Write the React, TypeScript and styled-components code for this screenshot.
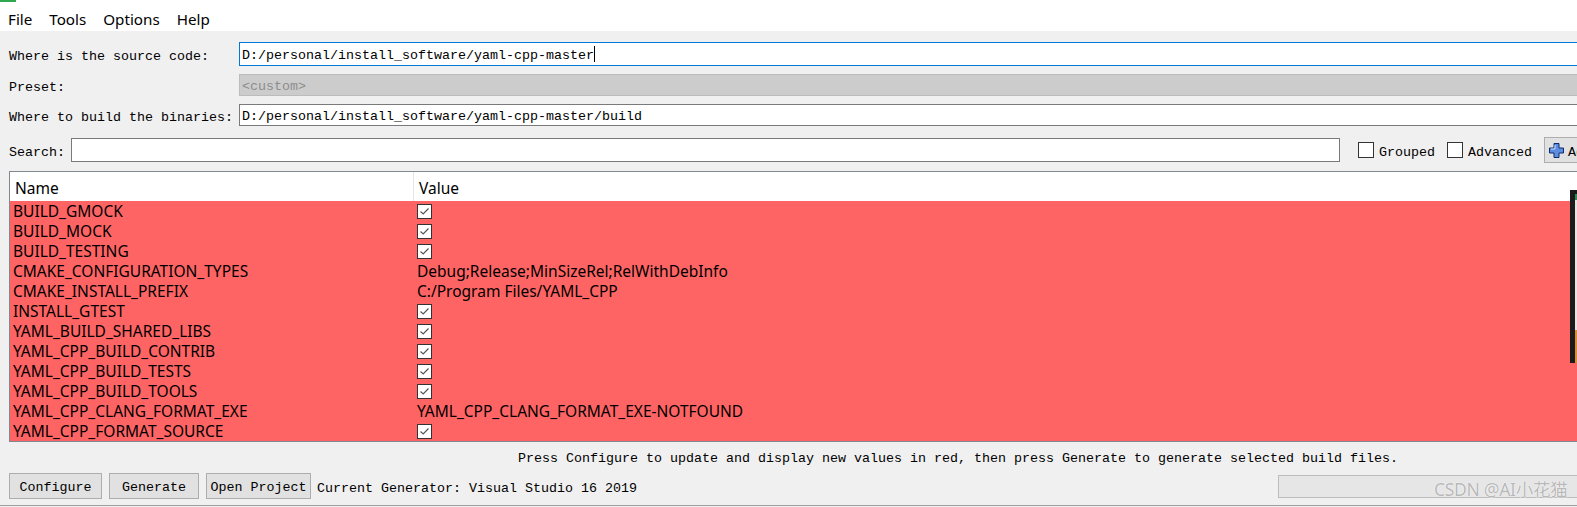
import React from "react";
import styled, { createGlobalStyle } from "styled-components";

const GlobalStyle = createGlobalStyle`
  html, body {
    margin: 0;
    padding: 0;
    overflow: hidden;
    background: #f0f0f0;
  }
`;

const Window = styled.div`
  position: relative;
  width: 1916px;
  height: 507px;
  display: flex;
  flex-direction: column;
  background: #f0f0f0;
  font-family: "Liberation Mono", "DejaVu Sans Mono", monospace;
  font-size: 13.333px;
  color: #000;
`;

const MenuBar = styled.div`
  height: 31px;
  background: #fff;
  display: flex;
  align-items: center;
  gap: 17px;
  padding-left: 8px;
  font-family: "Noto Sans", sans-serif;
  font-size: 15.2px;
`;

const MenuItem = styled.span`
  line-height: 20px;
  padding-top: 6px;
`;

const PathGrid = styled.div`
  display: grid;
  grid-template-columns: 230px 1fr;
  row-gap: 8px;
  align-items: center;
  padding: 11px 0 0 9px;
`;

const Label = styled.span`
  white-space: pre;
  padding-top: 4px;
`;

const PathField = styled.div<{ $variant: "focus" | "normal" | "disabled"; $h: number }>`
  height: ${({ $h }) => $h}px;
  box-sizing: border-box;
  display: flex;
  align-items: center;
  padding: 3px 0 0 2px;
  white-space: pre;
  background: ${({ $variant }) => ($variant === "disabled" ? "#cccccc" : "#fff")};
  border: 1px solid
    ${({ $variant }) =>
      $variant === "focus" ? "#0078d7" : $variant === "disabled" ? "#bcbcbc" : "#7a7a7a"};
  border-right: none;
  color: ${({ $variant }) => ($variant === "disabled" ? "#8c8c8c" : "#000")};
`;

const Caret = styled.span`
  display: inline-block;
  width: 1px;
  height: 16px;
  margin-top: -3px;
  background: #000;
`;

const SearchRow = styled.div`
  display: flex;
  align-items: center;
  margin-top: 12px;
  padding-left: 9px;
  height: 24px;
`;

const SearchLabel = styled.span`
  width: 62px;
  padding-top: 4px;
`;

const SearchInput = styled.div`
  width: 1269px;
  height: 24px;
  box-sizing: border-box;
  background: #fff;
  border: 1px solid #7a7a7a;
`;

const CheckOption = styled.label<{ $ml: number }>`
  display: flex;
  align-items: center;
  gap: 5px;
  margin-left: ${({ $ml }) => $ml}px;
  white-space: pre;
`;

const OptionText = styled.span`
  padding-top: 4px;
`;

const CheckBoxSquare = styled.span`
  width: 16px;
  height: 16px;
  box-sizing: border-box;
  border: 1px solid #333;
  background: #fff;
`;

const ToolButton = styled.div`
  margin-left: 12px;
  height: 26px;
  box-sizing: border-box;
  display: flex;
  align-items: center;
  gap: 4px;
  padding-left: 4px;
  padding-right: 8px;
  background: #e1e1e1;
  border: 1px solid #adadad;
  white-space: pre;
`;

const Table = styled.div`
  margin: 9px 0 0 9px;
  border: 1px solid #828790;
  border-right: none;
  background: #fff;
  font-family: "Noto Sans", sans-serif;
  font-size: 15.5px;
`;

const HeaderRow = styled.div`
  display: grid;
  grid-template-columns: 403px 1fr;
  height: 29px;
  align-items: center;
  background: #fff;
`;

const HeaderCell = styled.div<{ $sep?: boolean }>`
  height: 100%;
  display: flex;
  align-items: center;
  padding-left: 5px;
  border-left: ${({ $sep }) => ($sep ? "1px solid #e5e5e5" : "none")};
  padding-top: 2px;
  box-sizing: border-box;
`;

const DataRow = styled.div`
  display: grid;
  grid-template-columns: 404px 1fr;
  height: 20px;
  align-items: center;
  background: #ff6464;
  line-height: 20px;
`;

const NameCell = styled.div`
  padding-left: 3px;
  white-space: pre;
`;

const ValueCell = styled.div`
  padding-left: 3px;
  display: flex;
  align-items: center;
  white-space: pre;
`;

const Message = styled.div`
  margin-top: 9px;
  height: 16px;
  line-height: 16px;
  text-align: center;
  white-space: pre;
`;

const BottomRow = styled.div`
  display: flex;
  align-items: center;
  gap: 7px;
  margin-top: 6px;
  padding: 0 9px;
  height: 26px;
`;

const PushButton = styled.div<{ $w: number }>`
  width: ${({ $w }) => $w}px;
  height: 26px;
  box-sizing: border-box;
  display: flex;
  align-items: center;
  justify-content: center;
  padding-top: 3px;
  background: #e1e1e1;
  border: 1px solid #adadad;
  white-space: pre;
`;

const GeneratorText = styled.span`
  margin-left: -1px;
  padding-top: 4px;
  white-space: pre;
`;

const ProgressBar = styled.div`
  margin-left: auto;
  width: 629px;
  height: 23px;
  box-sizing: border-box;
  background: #e6e6e6;
  border: 1px solid #bcbcbc;
`;

const BottomLine = styled.div`
  margin-top: 6px;
  border-top: 1px solid #a0a0a0;
  flex: 1;
`;

const OtherWindow = styled.div`
  position: absolute;
  left: 1570px;
  top: 190px;
  width: 7px;
  height: 173px;
  background: #1b1b1b;
  display: flex;
  flex-direction: column;
  padding: 4px 0 0 5px;
  box-sizing: border-box;
`;

const Strip = styled.div<{ $c: string; $h: number }>`
  height: ${({ $h }) => $h}px;
  background: ${({ $c }) => $c};
`;

const Watermark = styled.div`
  position: absolute;
  left: 1434px;
  top: 476px;
  font-family: "Noto Sans", "Noto Sans CJK SC", sans-serif;
  font-size: 17.5px;
  color: #b8b8b8;
  text-shadow: 0 0 1px #fff, 0 0 1px #fff;
  white-space: pre;
  letter-spacing: -0.3px;
`;

const TitleBits = styled.div`
  position: absolute;
  left: 0;
  top: 0;
  width: 16px;
  height: 2px;
  background: #2fa84f;
`;

function Check() {
  return (
    <svg width="15" height="15" viewBox="0 0 15 15">
      <rect x="0.5" y="0.5" width="14" height="14" fill="#fff" stroke="#333" />
      <path d="M3.5 7.5 L6.2 10 L11.5 4.5" fill="none" stroke="#555" strokeWidth="1.2" />
    </svg>
  );
}

function PlusIcon() {
  return (
    <svg width="15" height="15" viewBox="0 0 15 15">
      <path
        d="M5 0.5 H10 V5 H14.5 V10 H10 V14.5 H5 V10 H0.5 V5 H5 Z"
        fill="#5b8de0"
        stroke="#102a6b"
        strokeWidth="1"
      />
      <path d="M6 2 V6 H2" fill="none" stroke="#c9dcff" strokeWidth="1" />
    </svg>
  );
}

type Entry = { name: string; value: string | boolean };

const entries: Entry[] = [
  { name: "BUILD_GMOCK", value: true },
  { name: "BUILD_MOCK", value: true },
  { name: "BUILD_TESTING", value: true },
  { name: "CMAKE_CONFIGURATION_TYPES", value: "Debug;Release;MinSizeRel;RelWithDebInfo" },
  { name: "CMAKE_INSTALL_PREFIX", value: "C:/Program Files/YAML_CPP" },
  { name: "INSTALL_GTEST", value: true },
  { name: "YAML_BUILD_SHARED_LIBS", value: true },
  { name: "YAML_CPP_BUILD_CONTRIB", value: true },
  { name: "YAML_CPP_BUILD_TESTS", value: true },
  { name: "YAML_CPP_BUILD_TOOLS", value: true },
  { name: "YAML_CPP_CLANG_FORMAT_EXE", value: "YAML_CPP_CLANG_FORMAT_EXE-NOTFOUND" },
  { name: "YAML_CPP_FORMAT_SOURCE", value: true },
];

export default function App() {
  return (
    <>
      <GlobalStyle />
      <Window>
        <TitleBits />
        <MenuBar>
          <MenuItem>File</MenuItem>
          <MenuItem>Tools</MenuItem>
          <MenuItem>Options</MenuItem>
          <MenuItem>Help</MenuItem>
        </MenuBar>

        <PathGrid>
          <Label>Where is the source code:</Label>
          <PathField $variant="focus" $h={24}>
            D:/personal/install_software/yaml-cpp-master
            <Caret />
          </PathField>
          <Label>Preset:</Label>
          <PathField $variant="disabled" $h={22}>
            {"<custom>"}
          </PathField>
          <Label>Where to build the binaries:</Label>
          <PathField $variant="normal" $h={22}>
            D:/personal/install_software/yaml-cpp-master/build
          </PathField>
        </PathGrid>

        <SearchRow>
          <SearchLabel>Search:</SearchLabel>
          <SearchInput />
          <CheckOption $ml={18}>
            <CheckBoxSquare />
            <OptionText>Grouped</OptionText>
          </CheckOption>
          <CheckOption $ml={12}>
            <CheckBoxSquare />
            <OptionText>Advanced</OptionText>
          </CheckOption>
          <ToolButton>
            <PlusIcon />
            <OptionText>Add Entry</OptionText>
          </ToolButton>
        </SearchRow>

        <Table>
          <HeaderRow>
            <HeaderCell>Name</HeaderCell>
            <HeaderCell $sep>Value</HeaderCell>
          </HeaderRow>
          {entries.map((e) => (
            <DataRow key={e.name}>
              <NameCell>{e.name}</NameCell>
              <ValueCell>{typeof e.value === "boolean" ? <Check /> : e.value}</ValueCell>
            </DataRow>
          ))}
        </Table>

        <Message>
          Press Configure to update and display new values in red, then press Generate to generate selected build files.
        </Message>

        <BottomRow>
          <PushButton $w={93}>Configure</PushButton>
          <PushButton $w={90}>Generate</PushButton>
          <PushButton $w={105}>Open Project</PushButton>
          <GeneratorText>Current Generator: Visual Studio 16 2019</GeneratorText>
          <ProgressBar />
        </BottomRow>
        <BottomLine />

        <OtherWindow>
          <Strip $c="#2e8b57" $h={6} />
          <Strip $c="#e4e4e4" $h={130} />
          <Strip $c="#e08a2e" $h={33} />
        </OtherWindow>
        <Watermark>CSDN @AI小花猫</Watermark>
      </Window>
    </>
  );
}
